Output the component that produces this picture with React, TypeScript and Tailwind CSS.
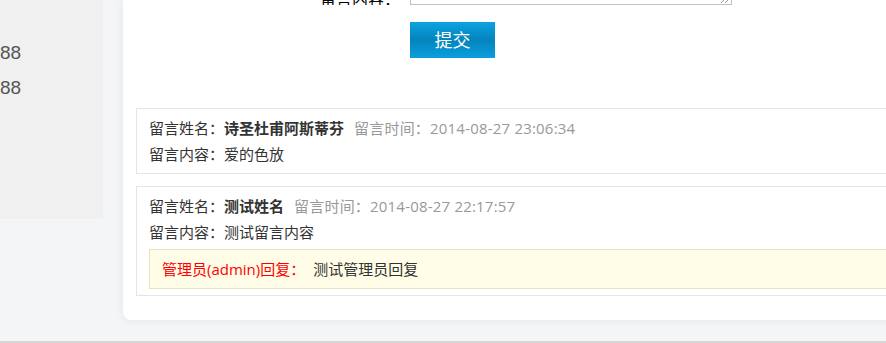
import React from "react";

const font = { fontFamily: '"Open Sans", "Noto Sans CJK SC", "Noto Sans", sans-serif' };

export default function App() {
  return (
    <div
      className="w-[886px] h-[343px] overflow-hidden bg-[#f4f5f7] flex flex-col"
      style={font}
    >
      <div className="flex items-start h-[341px] shrink-0">
        <div
          className="w-[103px] h-[219px] shrink-0 bg-[#f0f0f0] overflow-hidden pt-[35px] text-[19px] leading-[35px] text-[#555]"
          style={{ fontFamily: '"Liberation Sans", Arial, sans-serif' }}
        >
          <div>88</div>
          <div>88</div>
        </div>
        <div className="ml-[20px] w-[900px] shrink-0 h-[320px] bg-white rounded-bl-[8px] shadow-[0_0_10px_rgba(0,0,0,0.07)] flex flex-col">
          <div className="h-[5px] overflow-hidden flex items-end">
            <div className="w-[287px] pr-[10px] text-right text-[16px] leading-[20px] text-black mb-[-4px]">
              留言内容：
            </div>
            <div className="w-[322px] h-[60px] border border-[#c0c0c0] shrink-0 relative">
              <svg className="absolute right-[2px] bottom-[1px]" width="10" height="10" viewBox="0 0 10 10">
                <line x1="2" y1="10" x2="10" y2="2" stroke="#999" strokeWidth="1" />
                <line x1="6" y1="10" x2="10" y2="6" stroke="#999" strokeWidth="1" />
              </svg>
            </div>
          </div>
          <button className="mt-[17px] ml-[287px] w-[85px] h-[36px] bg-linear-to-b from-[#0ba3e1] via-[#0584bd] to-[#0a9fdd] text-white text-[18px] leading-[36px] text-center">
            提交
          </button>
          <div className="mt-[50px] pl-[13px] flex flex-col gap-[12px] text-[15px] text-[#333]">
            <div className="border border-[#e5e5e5] border-r-0 px-[12px] pt-[6px] pb-[6px] leading-[26px]">
              <div className="whitespace-nowrap">
                留言姓名：<span className="font-bold">诗圣杜甫阿斯蒂芬</span>
                <span className="ml-[10px] text-[#999] tracking-[0.2px]">留言时间：2014-08-27 23:06:34</span>
              </div>
              <div>留言内容：爱的色放</div>
            </div>
            <div className="border border-[#e5e5e5] border-r-0 px-[12px] pt-[6px] pb-[6px] leading-[26px]">
              <div className="whitespace-nowrap">
                留言姓名：<span className="font-bold">测试姓名</span>
                <span className="ml-[10px] text-[#999] tracking-[0.2px]">留言时间：2014-08-27 22:17:57</span>
              </div>
              <div>留言内容：测试留言内容</div>
              <div className="mt-[4px] h-[40px] bg-[#fffde7] border border-[#e8e3bf] border-r-0 px-[12px] flex items-center">
                <span className="text-[#ff0000]">管理员(admin)回复：</span>
                <span className="ml-[8px]">测试管理员回复</span>
              </div>
            </div>
          </div>
        </div>
      </div>
      <div className="h-[2px] bg-[#d6d6d6] shrink-0" />
    </div>
  );
}
